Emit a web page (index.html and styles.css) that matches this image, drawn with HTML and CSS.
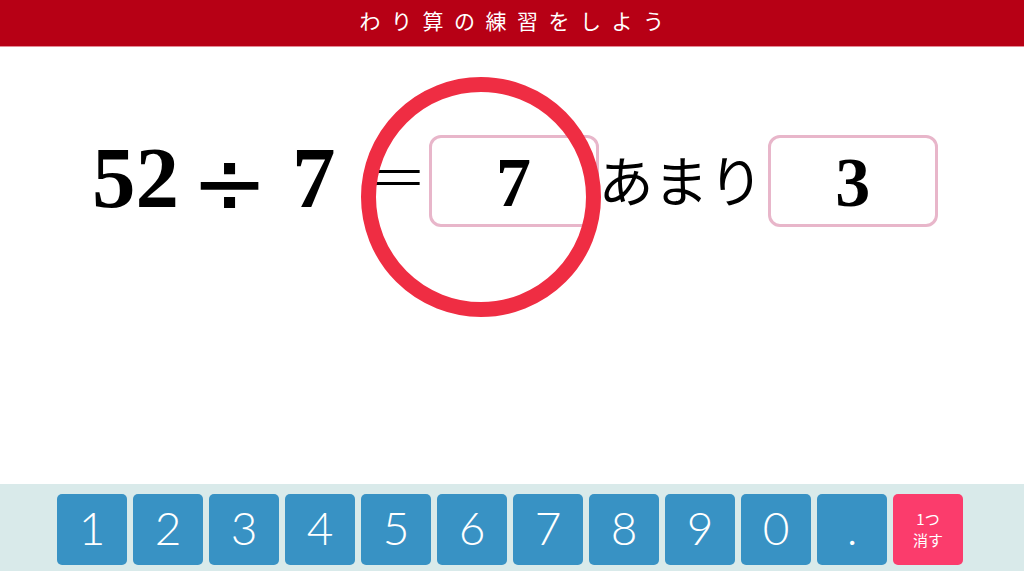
FILE: index.html
```html
<!DOCTYPE html>
<html lang="ja">
<head>
<meta charset="utf-8">
<link rel="stylesheet" href="styles.css">
</head>
<body>
<div class="page">
  <header class="bar"><h1 class="title">わり算の練習をしよう</h1></header>
  <main class="stage">
    <div class="eq">
      <span class="num big">52</span>
      <span class="op div">÷</span>
      <span class="num big seven">7</span>
      <span class="op eqs">=</span>
      <span class="box"><span class="num ans">7</span></span>
      <span class="amari">あまり</span>
      <span class="box"><span class="num ans">3</span></span>
    </div>
    <div class="ring"></div>
  </main>
  <footer class="pad">
    <button class="key">1</button>
    <button class="key">2</button>
    <button class="key">3</button>
    <button class="key">4</button>
    <button class="key">5</button>
    <button class="key">6</button>
    <button class="key">7</button>
    <button class="key">8</button>
    <button class="key">9</button>
    <button class="key">0</button>
    <button class="key">.</button>
    <button class="key del"><span class="dl">1つ</span><span class="dl">消す</span></button>
  </footer>
</div>
</body>
</html>
```
FILE: styles.css
```css
html, body { margin: 0; padding: 0; }
body { width: 1024px; height: 571px; overflow: hidden; background: #fff; font-family: "Noto Sans CJK JP", "Noto Sans", sans-serif; }
.page { display: flex; flex-direction: column; height: 571px; }
.bar { background: #b70015; border-bottom: 1px solid #e58a96; display: flex; align-items: center; justify-content: center; box-sizing: border-box; height: 47px; padding-bottom: 5px; }
.title { margin: 0; color: #fff; font-weight: 400; font-size: 21px; letter-spacing: 10.5px; padding-left: 10px; line-height: 1; font-family: "Noto Sans CJK JP", sans-serif; }
.stage { position: relative; flex: 1; }
.eq { display: flex; align-items: center; height: 92px; margin-top: 88px; padding-left: 92px; }
.num { font-family: "Liberation Serif", serif; font-weight: 700; color: #000; line-height: 1; }
.big { font-size: 87px; margin-bottom: 8px; }
.seven { margin-left: 24px; }
.op { font-family: "DejaVu Sans", sans-serif; color: #000; line-height: 1; }
.div { font-size: 92px; font-weight: 400; margin-left: 12px; margin-bottom: -6px; }
.eqs { font-size: 74px; font-weight: 200; margin-left: 30px; margin-right: 1px; margin-bottom: 12px; }
.box { box-sizing: border-box; width: 170px; height: 92px; border: 3px solid #e8b6ca; border-radius: 12px; display: flex; align-items: center; justify-content: center; }
.ans { font-size: 70px; margin-top: 4px; }
.amari { font-size: 55px; line-height: 1; margin: 0 4px 6px 0; color: #000; }
.ring { position: absolute; left: 361px; top: 30px; width: 240px; height: 240px; box-sizing: border-box; border: 15px solid #ef2d43; border-radius: 50%; }
.pad { height: 87px; background: #d9eaea; display: flex; gap: 6px; padding: 10px 0 0 57px; box-sizing: border-box; }
.key { width: 70px; height: 71px; border: none; border-radius: 5px; background: #3892c4; color: #fff; font-family: "Lato", sans-serif; font-weight: 300; font-size: 46px; padding: 0 0 3px; margin: 0; display: flex; align-items: center; justify-content: center; line-height: 1; }
.del { background: #fb3c6c; flex-direction: column; font-family: "Noto Sans CJK JP", sans-serif; font-size: 15px; font-weight: 400; gap: 3px; padding: 0; }
.dl { display: block; line-height: 18px; height: 18px; }
```
